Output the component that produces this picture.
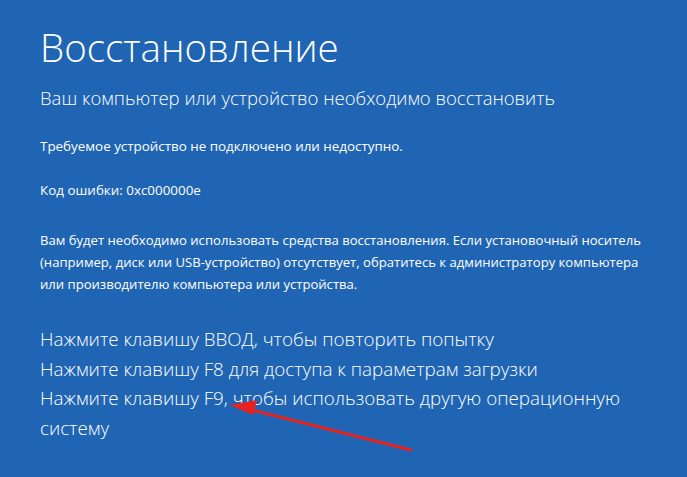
export default function App() {
  return (
    <div
      className="relative h-[477px] w-[687px] overflow-hidden bg-[#1f65b4] text-white"
      style={{ fontFamily: '"Open Sans", "Noto Sans", sans-serif' }}
    >
      <div className="px-[40px] pt-[21px]">
        <h1 className="text-[38.5px] font-light leading-[52px]">Восстановление</h1>
        <p className="mt-[12px] text-[18.5px] font-light leading-[26px]">
          Ваш компьютер или устройство необходимо восстановить
        </p>
        <p className="mt-[24px] text-[13.4px] leading-[22px]">
          Требуемое устройство не подключено или недоступно.
        </p>
        <p className="mt-[22px] text-[13.4px] leading-[22px]">Код ошибки: 0xc000000e</p>
        <p className="mt-[28px] text-[13.1px] leading-[22px]">
          Вам будет необходимо использовать средства восстановления. Если установочный носитель
          <br />
          (например, диск или USB-устройство) отсутствует, обратитесь к администратору компьютера
          <br />
          или производителю компьютера или устройства.
        </p>
        <div className="mt-[30px] text-[18.8px] font-light leading-[29.7px]">
          <p>Нажмите клавишу ВВОД, чтобы повторить попытку</p>
          <p>Нажмите клавишу F8 для доступа к параметрам загрузки</p>
          <p>Нажмите клавишу F9, чтобы использовать другую операционную</p>
          <p>систему</p>
        </div>
      </div>

      {/* красная стрелка */}
      <svg className="absolute left-0 top-0" width="687" height="477" viewBox="0 0 687 477">
        <line x1="411" y1="450" x2="248" y2="409" stroke="#e8231f" strokeWidth="3" strokeLinecap="round" />
        <polygon points="230,405 257,400 253,415" fill="#e8231f" />
      </svg>
    </div>
  );
}
